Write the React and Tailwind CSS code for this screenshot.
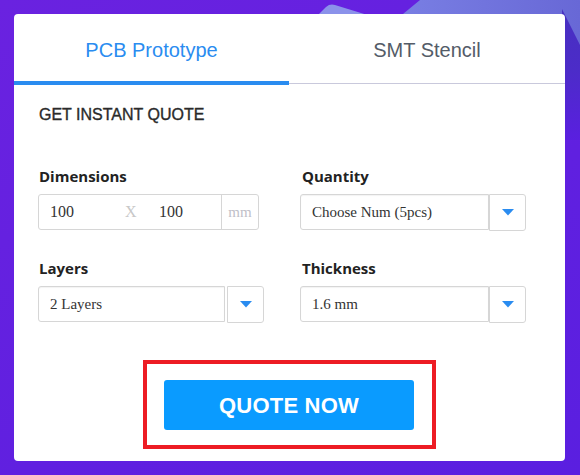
import React from "react";

function Caret() {
  return (
    <svg width="12" height="7" viewBox="0 0 12 7" className="block">
      <path d="M0 0 L12 0 L6 6.5 Z" fill="#2a8cf0" />
    </svg>
  );
}

function SelectBox({ value, mainW, gap }) {
  return (
    <div className="flex items-start h-[37px]">
      <div
        className={`${mainW} h-[36px] border border-[#d6d6d6] rounded-l-[3px] flex items-center pl-[11px] text-[15px] text-[#333] shadow-[inset_0_1px_1px_rgba(0,0,0,0.05)]`}
        style={{ fontFamily: '"Liberation Serif", serif' }}
      >
        {value}
      </div>
      <div className={`${gap} w-[37px] h-[37px] border border-[#d6d6d6] rounded-r-[3px] flex items-center justify-center`}>
        <Caret />
      </div>
    </div>
  );
}

export default function App() {
  return (
    <div
      className="relative w-[580px] h-[475px] overflow-hidden bg-[linear-gradient(150deg,#6a22e0_0%,#6020e0_60%,#5a1fe0_100%)] p-[14px] pr-[15px]"
      style={{ fontFamily: '"Liberation Sans", Arial, sans-serif' }}
    >
      <svg className="absolute inset-0" width="580" height="475" viewBox="0 0 580 475">
        <defs>
          <linearGradient id="dk" x1="0" y1="0" x2="0" y2="1">
            <stop offset="0" stopColor="#4630c0" />
            <stop offset="0.5" stopColor="#4c2cc8" />
            <stop offset="1" stopColor="#5a1fe0" />
          </linearGradient>
          <linearGradient id="lb" x1="0" y1="0" x2="1" y2="0">
            <stop offset="0" stopColor="#7a80e4" />
            <stop offset="1" stopColor="#6868d6" />
          </linearGradient>
        </defs>
        <polygon points="540,0 580,0 580,140 540,140" fill="url(#dk)" />
        <polygon points="420,0 580,0 580,45 562,9 562,60 390,60 403,14" fill="url(#lb)" />
        <path d="M316 17 L326 7 Q330 3.5 335 5 L374 17 Z" fill="#8b92ea" />
      </svg>

      <div className="relative h-[447px] bg-white rounded-[4px] overflow-hidden">
        {/* Tabs */}
        <div className="grid grid-cols-[275px_1fr] h-[71px]">
          <div className="border-b-4 border-[#2a8cf0] flex justify-center pt-[24px]">
            <span className="text-[20px] leading-[24px] text-[#2a8cf0]">PCB Prototype</span>
          </div>
          <div className="flex flex-col">
            <div className="flex-1 flex justify-center pt-[24px]">
              <span className="text-[20px] leading-[24px] text-[#545c68]">SMT Stencil</span>
            </div>
            <div className="h-[1px] bg-[#c9c9dc] mb-[1px]" />
          </div>
        </div>

        {/* Body */}
        <div className="pl-[24px]">
          <div className="mt-[20px] text-[16px] leading-[20px] text-[#2a2a2a] pl-[1px] [-webkit-text-stroke:0.35px_#2a2a2a]">
            GET INSTANT QUOTE
          </div>

          <div className="mt-[41px] grid grid-cols-[226px_226px] gap-x-[36px]">
            <div>
              <div
                className="text-[15px] leading-[20px] font-bold text-[#222] pl-[1px]"
                style={{ fontFamily: '"Open Sans", sans-serif' }}
              >
                Dimensions
              </div>
              <div
                className="mt-[8px] w-[221px] h-[36px] border border-[#d6d6d6] rounded-[3px] flex items-center text-[16px] text-[#333]"
                style={{ fontFamily: '"Liberation Serif", serif' }}
              >
                <span className="pl-[11px] w-[86px]">100</span>
                <span className="text-[#c8c8c8] w-[34px] text-[16px]">X</span>
                <span className="flex-1">100</span>
                <div className="h-full border-l border-[#d6d6d6] w-[37px] flex items-center justify-center text-[15px] text-[#c0c0c8]">
                  mm
                </div>
              </div>
            </div>
            <div>
              <div
                className="text-[15px] leading-[20px] font-bold text-[#222] pl-[2px]"
                style={{ fontFamily: '"Open Sans", sans-serif' }}
              >
                Quantity
              </div>
              <div className="mt-[8px]">
                <SelectBox value="Choose Num (5pcs)" mainW="w-[189px]" gap="ml-0" />
              </div>
            </div>

            <div className="mt-[27px]">
              <div
                className="text-[15px] leading-[20px] font-bold text-[#222] pl-[1px]"
                style={{ fontFamily: '"Open Sans", sans-serif' }}
              >
                Layers
              </div>
              <div className="mt-[8px]">
                <SelectBox value="2 Layers" mainW="w-[187px]" gap="ml-[2px]" />
              </div>
            </div>
            <div className="mt-[27px]">
              <div
                className="text-[15px] leading-[20px] font-bold text-[#222] pl-[2px]"
                style={{ fontFamily: '"Open Sans", sans-serif' }}
              >
                Thickness
              </div>
              <div className="mt-[8px]">
                <SelectBox value="1.6 mm" mainW="w-[189px]" gap="ml-0" />
              </div>
            </div>
          </div>
        </div>

        <div className="mt-[37px] flex justify-center">
          <div className="border-4 border-[#ed1c24] pt-[16px] pb-[15px] pl-[17px] pr-[18px]">
            <button className="w-[250px] h-[50px] rounded-[3px] bg-[#0a9bff] text-white text-[22px] font-bold tracking-[0.2px] flex items-center justify-center">
              QUOTE NOW
            </button>
          </div>
        </div>
      </div>
    </div>
  );
}
